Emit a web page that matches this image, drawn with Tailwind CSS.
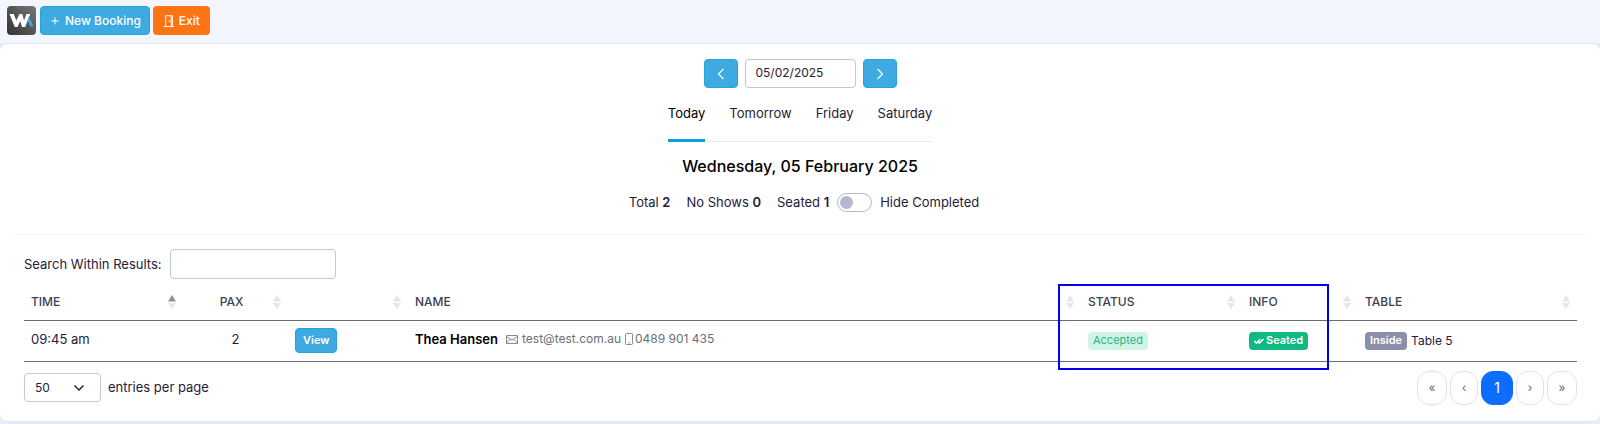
<!DOCTYPE html>
<html lang="en">
<head>
    <meta charset="UTF-8">
    <meta name="viewport" content="width=device-width, initial-scale=1.0">
    <title>Bookings</title>
    <script src="https://cdn.jsdelivr.net/npm/@tailwindcss/browser@4"></script>
</head>
<body class="bg-[#e9ecf8] font-['Inter','Liberation_Sans',sans-serif] text-sm text-[#1f2138]">

    <!-- Arrow pair used by every sortable column -->
    <svg class="hidden">
        <symbol id="sort" viewBox="0 0 8 14">
            <path d="M0 6.5 4 0l4 6.5z" />
            <path d="M0 8h8l-4 6z" fill="#e6e6e6" />
        </symbol>
    </svg>

    <!-- Top bar -->
    <div class="bg-[#f3f5ff]">
        <header class="flex items-center gap-[3px] px-[7px] pt-1.5 pb-2">
            <a href="#" aria-label="Home" class="mr-px block size-[29px] overflow-hidden rounded">
                <svg viewBox="0 0 29 29" class="size-full">
                    <defs>
                        <linearGradient id="logoBg" x1="0" y1="1" x2="1" y2="0">
                            <stop offset="0" stop-color="#333" />
                            <stop offset="1" stop-color="#777" />
                        </linearGradient>
                    </defs>
                    <rect width="29" height="29" fill="url(#logoBg)" />
                    <path d="M2.500 8h4.200l2.600 6.500L12.500 8h2.800l1.700 6.500L19.500 8h3.700l-5 13h-3.200l-1.700-6-2.800 6H7.800z" fill="#fff" />
                    <path d="M22 10.500 26.500 20.500H23.200L20.500 14z" fill="#3ea8e0" />
                </svg>
            </a>
            <button type="button" class="flex h-[29px] items-center gap-1 rounded border border-[#25a3dd] bg-[#3fa9e1] px-2 text-xs font-medium text-white">
                <svg viewBox="0 0 12 12" class="size-3" fill="none" stroke="currentColor"><path d="M6 2.500v7M2.500 6h7" /></svg>
                New Booking
            </button>
            <button type="button" class="flex h-[29px] items-center gap-1 rounded bg-[#fd7414] px-2.5 text-xs font-medium text-white">
                <svg viewBox="0 0 16 16" class="size-3" fill="none" stroke="currentColor" stroke-width="1.300"><path d="M1 15.300h14M3.500 15V1h9v14M11 1v14" /><circle cx="9" cy="8" r=".7" fill="currentColor" /></svg>
                Exit
            </button>
        </header>
    </div>

    <main class="rounded-lg border-y border-[#e3e6f3] bg-white px-3.5 pt-[15px] pb-4">
        <!-- Date picker -->
        <div class="flex justify-center gap-[7px]">
            <button type="button" aria-label="Previous day" class="flex h-[29px] w-[34px] items-center justify-center rounded border border-[#25a3dd] bg-[#3fa9e1] text-white">
                <svg viewBox="0 0 12 12" class="size-3" fill="none" stroke="currentColor" stroke-width="1.200"><path d="M8.500 1 3.500 6l5 5" /></svg>
            </button>
            <input type="text" value="05/02/2025" aria-label="Booking date" class="h-[29px] w-[111px] rounded border border-[#c3c6d6] bg-white px-2.5 pb-0.5 text-xs">
            <button type="button" aria-label="Next day" class="flex h-[29px] w-[34px] items-center justify-center rounded border border-[#25a3dd] bg-[#3fa9e1] text-white">
                <svg viewBox="0 0 12 12" class="size-3" fill="none" stroke="currentColor" stroke-width="1.200"><path d="m3.500 1 5 5-5 5" /></svg>
            </button>
        </div>

        <!-- Day tabs -->
        <div class="flex justify-center">
            <nav class="flex h-[54px] gap-6 border-b border-[#e4e7f5] text-[13px]">
                <a href="#" class="-mb-px border-b-3 border-[#12a0dc] pt-4 text-black">Today</a>
                <a href="#" class="pt-4">Tomorrow</a>
                <a href="#" class="pt-4">Friday</a>
                <a href="#" class="pt-4">Saturday</a>
            </nav>
        </div>

        <h1 class="mt-3 text-center text-base leading-6 font-medium text-black">Wednesday, 05 February 2025</h1>

        <!-- Totals -->
        <div class="mt-3.5 flex h-5 items-center justify-center gap-4 pl-2 text-[13px]">
            <span>Total <b class="font-semibold">2</b></span>
            <span>No Shows <b class="font-semibold">0</b></span>
            <div class="flex items-center gap-2">
                <span>Seated <b class="font-semibold">1</b></span>
                <input type="checkbox" id="hideCompleted" class="flex h-[19px] w-[35px] appearance-none items-center rounded-full border border-[#b5b8cd] px-0.5 before:size-[13px] before:rounded-full before:bg-[#b5b8cd] checked:justify-end">
                <label for="hideCompleted">Hide Completed</label>
            </div>
        </div>

        <hr class="mt-[22px] border-[#f4f4f7]">

        <div class="pt-3.5 pr-[9px] pl-2.5">
            <div class="flex items-center gap-2">
                <label for="search" class="text-[13px]">Search Within Results:</label>
                <input type="search" id="search" class="h-[30px] w-[166px] rounded border border-[#c3c6d6] px-2 text-xs">
            </div>

            <div class="relative mt-1.5">
                <table class="w-full table-fixed text-left">
                    <colgroup>
                        <col class="w-[159px]">
                        <col class="w-[105px]">
                        <col class="w-[120px]">
                        <col>
                        <col class="w-[161px]">
                        <col class="w-[116px]">
                        <col class="w-[219px]">
                    </colgroup>
                    <thead>
                        <tr class="h-[35px] border-b border-[#6c6c6c] text-xs text-[#3c3f50] [&_svg]:h-3.5 [&_svg]:w-2 [&_svg]:shrink-0 [&_svg]:fill-[#e6e6e6] [&_th]:px-[7px] [&_th]:font-medium">
                            <th><div class="flex items-center justify-between">TIME <svg class="text-[#8f8f8f]" viewBox="0 0 8 14"><path d="M0 6.500 4 0l4 6.500z" fill="currentColor" /><path d="M0 8h8l-4 6z" /></svg></div></th>
                            <th><div class="flex items-center"><span class="grow text-center">PAX</span><svg><use href="#sort" /></svg></div></th>
                            <th><div class="flex justify-end"><svg><use href="#sort" /></svg></div></th>
                            <th><div class="flex items-center justify-between">NAME <svg><use href="#sort" /></svg></div></th>
                            <th><div class="flex items-center justify-between">STATUS <svg><use href="#sort" /></svg></div></th>
                            <th><div class="flex items-center justify-between">INFO <svg><use href="#sort" /></svg></div></th>
                            <th><div class="flex items-center justify-between">TABLE <svg><use href="#sort" /></svg></div></th>
                        </tr>
                    </thead>
                    <tbody>
                        <tr class="h-[41px] border-b border-[#6c6c6c] [&_td]:px-[7px]">
                            <td class="pb-0.5 text-[13px]">09:45 am</td>
                            <td class="pb-0.5 text-center text-[13px]">2</td>
                            <td><button type="button" class="block h-[25px] rounded border border-[#25a3dd] bg-[#3fa9e1] px-[7px] text-[11px] font-semibold text-white">View</button></td>
                            <td>
                                <div class="flex items-center pb-0.5 text-xs text-[#6b6e7d]">
                                    <a href="#" class="mr-2 text-[13px] font-semibold text-black">Thea Hansen</a>
                                    <svg viewBox="0 0 12 9" class="mr-1 h-[9px] w-3" fill="none" stroke="currentColor" stroke-width=".8"><path d="M.5.5h11v8H.5zM.5 1.500 6 5l5.500-3.500M.5 8l4-4M11.500 8l-4-4" /></svg>
                                    <span class="mr-1">test@test.com.au</span>
                                    <svg viewBox="0 0 8 12" class="mr-0.5 h-3 w-2" fill="none" stroke="currentColor" stroke-width=".8"><rect x=".5" y=".5" width="7" height="11" rx="1" /><path d="M3.200 9.800h1.600" /></svg>
                                    <span>0489 901 435</span>
                                </div>
                            </td>
                            <td><div class="flex"><span class="flex h-[18px] items-center rounded bg-[#cff3e6] px-[5px] text-[11px] text-[#2bb583]">Accepted</span></div></td>
                            <td>
                                <div class="flex">
                                    <span class="flex h-[18px] items-center gap-0.5 rounded bg-[#10b981] px-[5px] text-[11px] font-semibold text-white">
                                        <svg viewBox="0 0 12 8" class="h-2 w-2.5" fill="none" stroke="currentColor" stroke-width="1.800"><path d="m.5 4 2.500 2.500L7.500 2M5 5l1.500 1.500L11.500 1.500" /></svg>
                                        Seated
                                    </span>
                                </div>
                            </td>
                            <td>
                                <div class="flex items-center gap-1 text-xs">
                                    <span class="flex h-[18px] items-center rounded bg-[#8c8fa9] px-[5px] text-[11px] font-semibold text-white">Inside</span>
                                    Table 5
                                </div>
                            </td>
                        </tr>
                    </tbody>
                </table>
                <!-- Highlight over the status and info columns -->
                <div class="pointer-events-none absolute -top-px right-[248px] h-[86px] w-[271px] border-2 border-[#0000ee]"></div>
            </div>

            <!-- Table footer -->
            <div class="mt-[9px] flex items-center justify-between">
                <div class="flex items-center gap-[7px]">
                    <div class="grid items-center">
                        <select id="pageSize" class="col-start-1 row-start-1 h-[29px] w-[77px] appearance-none rounded border border-[#c3c6d6] px-2.5 text-xs">
                            <option>10</option>
                            <option>25</option>
                            <option selected>50</option>
                        </select>
                        <svg viewBox="0 0 12 12" class="pointer-events-none col-start-1 row-start-1 mr-4 size-3 justify-self-end" fill="none" stroke="currentColor" stroke-width="1.500"><path d="m1.500 3.500 4.500 4.500 4.500-4.500" /></svg>
                    </div>
                    <label for="pageSize" class="text-[13px]">entries per page</label>
                </div>
                <nav aria-label="Pages" class="flex gap-[3px] text-xs text-[#6b6e7d] [&_button]:h-[34px] [&_button]:rounded-xl [&_button]:border [&_button]:border-[#e2e4e9]">
                    <button type="button" class="w-[30px]">«</button>
                    <button type="button" class="w-7">‹</button>
                    <button type="button" class="w-8 border-[#0d6efd]! bg-[#0d6efd] text-sm text-white">1</button>
                    <button type="button" class="w-7">›</button>
                    <button type="button" class="w-[30px]">»</button>
                </nav>
            </div>
        </div>
    </main>

</body>
</html>
